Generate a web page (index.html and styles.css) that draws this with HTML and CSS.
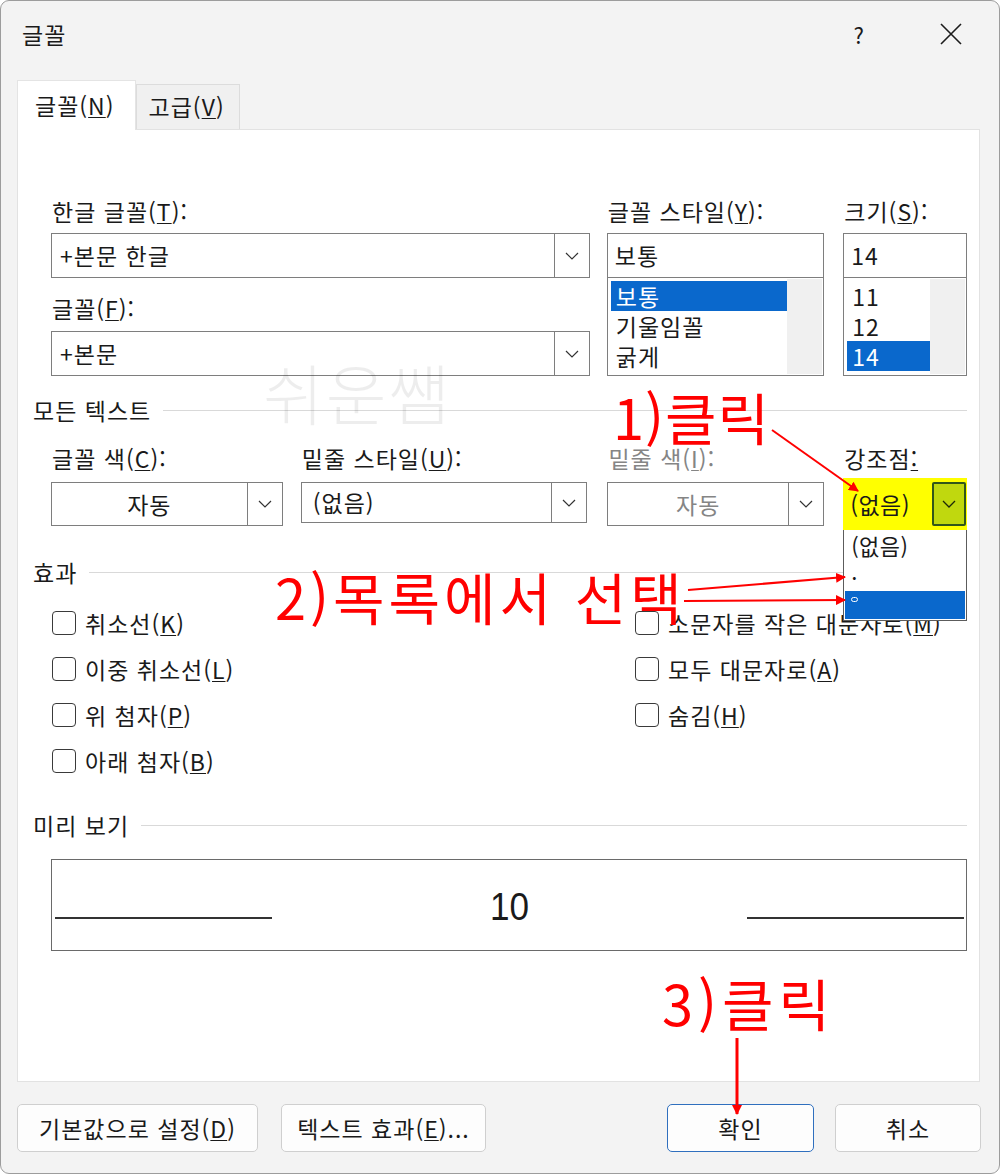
FILE: index.html
```html
<!DOCTYPE html>
<html lang="ko">
<head>
  <meta charset="UTF-8" />
  <title>글꼴</title>
  <link rel="stylesheet" href="styles.css">
</head>
<body>
  <div class="dialog">
    <div class="titlebar">
      <span class="title">글꼴</span>
      <span class="help">?</span>
      <svg class="close" width="24" height="24" viewBox="0 0 24 24"><path d="M2 2 L22 22 M22 2 L2 22" stroke="#1b1b1b" stroke-width="1.6" fill="none"/></svg>
    </div>

    <div class="tabs">
      <div class="tab active">글꼴(<u>N</u>)</div>
      <div class="tab">고급(<u>V</u>)</div>
    </div>

    <div class="panel">
      <div class="font-grid">
        <div class="col col-face">
          <div class="field-label">한글 글꼴(<u>T</u>):</div>
          <div class="combo">
            <span class="combo-text">+본문 한글</span>
            <span class="drop"><svg width="14" height="8" viewBox="0 0 14 8"><path d="M1 1 L7 7 L13 1" stroke="#333" stroke-width="1.2" fill="none"/></svg></span>
          </div>
          <div class="field-label next">글꼴(<u>F</u>):</div>
          <div class="combo">
            <span class="combo-text">+본문</span>
            <span class="drop"><svg width="14" height="8" viewBox="0 0 14 8"><path d="M1 1 L7 7 L13 1" stroke="#333" stroke-width="1.2" fill="none"/></svg></span>
          </div>
        </div>
        <div class="col col-style">
          <div class="field-label">글꼴 스타일(<u>Y</u>):</div>
          <div class="textbox">보통</div>
          <div class="listbox">
            <ul class="items">
              <li class="selected">보통</li>
              <li>기울임꼴</li>
              <li>굵게</li>
            </ul>
            <div class="scroll"></div>
          </div>
        </div>
        <div class="col col-size">
          <div class="field-label">크기(<u>S</u>):</div>
          <div class="textbox">14</div>
          <div class="listbox">
            <ul class="items">
              <li>11</li>
              <li>12</li>
              <li class="selected">14</li>
            </ul>
            <div class="scroll"></div>
          </div>
        </div>
      </div>

      <div class="section"><span>모든 텍스트</span></div>
      <div class="all-text">
        <div class="col w-color">
          <div class="field-label">글꼴 색(<u>C</u>):</div>
          <div class="combo short">
            <span class="combo-text center">자동</span>
            <span class="drop"><svg width="14" height="8" viewBox="0 0 14 8"><path d="M1 1 L7 7 L13 1" stroke="#333" stroke-width="1.2" fill="none"/></svg></span>
          </div>
        </div>
        <div class="col w-under">
          <div class="field-label">밑줄 스타일(<u>U</u>):</div>
          <div class="combo short slim">
            <span class="combo-text">(없음)</span>
            <span class="drop"><svg width="14" height="8" viewBox="0 0 14 8"><path d="M1 1 L7 7 L13 1" stroke="#333" stroke-width="1.2" fill="none"/></svg></span>
          </div>
        </div>
        <div class="col w-ucolor">
          <div class="field-label disabled">밑줄 색(<u>I</u>):</div>
          <div class="combo short">
            <span class="combo-text center disabled">자동</span>
            <span class="drop"><svg width="14" height="8" viewBox="0 0 14 8"><path d="M1 1 L7 7 L13 1" stroke="#333" stroke-width="1.2" fill="none"/></svg></span>
          </div>
        </div>
        <div class="col w-emph">
          <div class="field-label">강조점<u>:</u></div>
          <div class="combo accent">
            <span class="combo-text">(없음)</span>
            <span class="drop"><svg width="14" height="8" viewBox="0 0 14 8"><path d="M1 1 L7 7 L13 1" stroke="#1d2a08" stroke-width="1.3" fill="none"/></svg></span>
            <ul class="droplist">
              <li>(없음)</li>
              <li class="dot">.</li>
              <li class="selected"><span class="mark"></span></li>
            </ul>
          </div>
        </div>
      </div>

      <div class="section"><span>효과</span></div>
      <div class="effects">
        <label class="check"><span class="box"></span>취소선(<u>K</u>)</label>
        <label class="check"><span class="box"></span>이중 취소선(<u>L</u>)</label>
        <label class="check"><span class="box"></span>위 첨자(<u>P</u>)</label>
        <label class="check"><span class="box"></span>아래 첨자(<u>B</u>)</label>
        <label class="check"><span class="box"></span>소문자를 작은 대문자로(<u>M</u>)</label>
        <label class="check"><span class="box"></span>모두 대문자로(<u>A</u>)</label>
        <label class="check"><span class="box"></span>숨김(<u>H</u>)</label>
      </div>

      <div class="section"><span>미리 보기</span></div>
      <div class="preview">
        <span class="rule"></span>
        <span class="sample">10</span>
        <span class="rule"></span>
      </div>
    </div>

    <div class="actions">
      <button class="btn btn-default-set">기본값으로 설정(<u>D</u>)</button>
      <button class="btn btn-effects">텍스트 효과(<u>E</u>)...</button>
      <span class="spacer"></span>
      <button class="btn btn-ok">확인</button>
      <button class="btn btn-cancel">취소</button>
    </div>

    <div class="watermark">쉬운쌤</div>

    <div class="note note-1">1)클릭</div>
    <div class="note note-2">2)목록에서 선택</div>
    <div class="note note-3">3)클릭</div>
    <svg class="arrows" width="1000" height="1174" viewBox="0 0 1000 1174">
      <defs>
        <marker id="head" markerWidth="10" markerHeight="10" refX="9" refY="5" orient="auto" markerUnits="userSpaceOnUse">
          <path d="M0 0 L10 5 L0 10 Z" fill="#f00"/>
        </marker>
      </defs>
      <g stroke="#f00" stroke-width="2" fill="none">
        <line x1="772" y1="430" x2="858" y2="491" marker-end="url(#head)"/>
        <line x1="688" y1="590" x2="845" y2="577" marker-end="url(#head)"/>
        <line x1="684" y1="601" x2="845" y2="600" marker-end="url(#head)"/>
        <line x1="737" y1="1038" x2="737" y2="1114" stroke-width="3" marker-end="url(#head)"/>
      </g>
    </svg>
  </div>
</body>
</html>
```

FILE: styles.css
```css
body {
  margin: 0;
  font-family: "Noto Sans CJK KR", "Noto Sans", sans-serif;
  color: #1a1a1a;
  background: #fff;
}

.dialog {
  position: relative;
  width: 1000px;
  height: 1174px;
  box-sizing: border-box;
  border: 1px solid #9c9c9c;
  border-radius: 9px;
  background: #f3f3f3;
  overflow: hidden;
  font-size: 23px;
  line-height: 30px;
  letter-spacing: 1px;
}

u {
  text-decoration-thickness: 1px;
  text-underline-offset: 2px;
}

/* title bar */
.titlebar {
  height: 79px;
  display: flex;
  align-items: flex-start;
  padding: 17px 36px 0 21px;
  box-sizing: border-box;
}
.title {
  font-size: 23px;
  line-height: 32px;
}
.help {
  margin-left: auto;
  font-size: 22px;
  line-height: 32px;
  margin-right: 74px;
}
.close {
  margin-top: 4px;
}

/* tabs */
.tabs {
  display: flex;
  align-items: flex-end;
  margin-left: 16px;
  height: 49px;
}
.tab {
  height: 45px;
  padding: 0 14px 0 12px;
  box-sizing: border-box;
  border: 1px solid #dcdcdc;
  border-bottom: none;
  background: #f0f0f0;
  line-height: 42px;
}
.tab.active {
  height: 50px;
  margin-bottom: -1px;
  background: #fff;
  padding: 0 20px 0 17px;
  line-height: 48px;
  position: relative;
  z-index: 1;
  border-color: #e4e4e4;
}

/* panel */
.panel {
  margin-left: 16px;
  width: 963px;
  height: 953px;
  box-sizing: border-box;
  background: #fff;
  border: 1px solid #e2e2e2;
  padding: 66px 12px 0 33px;
}

.font-grid {
  display: flex;
}
.col {
  display: flex;
  flex-direction: column;
}
.col-face { width: 540px; }
.col-style { width: 218px; margin-left: 17px; }
.col-size { width: 124px; margin-left: 19px; }

.field-label {
  height: 30px;
  padding-left: 1px;
  margin-bottom: 7px;
  white-space: nowrap;
}
.field-label.next {
  margin-top: 15px;
  margin-bottom: 8px;
}
.field-label.disabled,
.combo-text.disabled {
  color: #858585;
}

.combo {
  position: relative;
  display: flex;
  height: 45px;
  box-sizing: border-box;
  border: 1px solid #7e7e7e;
  background: #fff;
}
.combo.short { height: 44px; }
.combo.slim { height: 41px; }
.combo-text {
  flex: 1;
  padding-left: 8px;
  line-height: 42px;
}
.combo.slim .combo-text { line-height: 38px; padding-left: 11px; }
.combo-text.center {
  text-align: center;
  padding-left: 0;
}
.drop {
  width: 34px;
  border-left: 1px solid #7e7e7e;
  display: flex;
  align-items: center;
  justify-content: center;
}

.textbox {
  height: 45px;
  box-sizing: border-box;
  border: 1px solid #7e7e7e;
  padding-left: 7px;
  line-height: 42px;
  background: #fff;
}
.listbox {
  height: 99px;
  margin-top: -1px;
  box-sizing: border-box;
  border: 1px solid #7e7e7e;
  display: flex;
  padding: 3px 1px 2px 3px;
  background: #fff;
}
.items {
  list-style: none;
  margin: 0;
  padding: 0;
  flex: 1;
}
.items li {
  height: 30px;
  line-height: 30px;
  padding-left: 5px;
}
.items li.selected {
  background: #0a68cc;
  color: #fff;
}
.scroll {
  width: 35px;
  margin: -2px 0 -1px;
  background: #f0f0f0;
}

/* section headers */
.section {
  display: flex;
  align-items: center;
  margin-left: -18px;
  height: 30px;
  margin-top: 19px;
}
.section::after {
  content: "";
  flex: 1;
  height: 1px;
  background: #d9d9d9;
  margin-left: 12px;
}

.all-text {
  display: flex;
  margin-top: 18px;
}
.all-text .field-label { margin-bottom: 9px; }
.w-color { width: 232px; }
.w-under { width: 287px; margin-left: 18px; }
.w-ucolor { width: 217px; margin-left: 20px; }
.w-emph { width: 124px; margin-left: 19px; }

.combo.accent {
  height: 52px;
  margin-top: -4px;
  border: none;
  background: #ffff00;
  padding: 4px 1px 4px 0;
}
.combo.accent .combo-text {
  font-size: 23px;
  line-height: 44px;
  padding-left: 7px;
  letter-spacing: 0.5px;
}
.combo.accent .drop {
  width: 30px;
  border: 2px solid #31561a;
  border-radius: 2px;
  background: #c0d80e;
}

.droplist {
  position: absolute;
  top: 52px;
  left: 0;
  width: 124px;
  height: 91px;
  box-sizing: border-box;
  margin: 0;
  padding: 0 1px;
  list-style: none;
  background: #fff;
  border: 1px solid #5c5c5c;
  border-top: none;
  z-index: 3;
}
.droplist li {
  height: 30px;
  line-height: 30px;
  padding-left: 6px;
  font-size: 22px;
  letter-spacing: 0.5px;
}
.droplist li.dot {
  height: 31px;
  line-height: 20px;
}
.droplist li.selected {
  height: 28px;
  background: #0a68cc;
}
.mark {
  display: inline-block;
  width: 5px;
  height: 3px;
  margin: 6px 0 0 0;
  border: 1.5px solid #fff;
  border-radius: 3px;
  vertical-align: top;
}

.all-text + .section { margin-top: 27px; }

.effects {
  display: grid;
  grid-template-columns: 583px 1fr;
  grid-template-rows: repeat(4, 46px);
  grid-auto-flow: column;
  margin-top: 13px;
}
.check {
  display: flex;
  align-items: center;
  padding-left: 1px;
  white-space: nowrap;
}
.box {
  width: 24px;
  height: 24px;
  box-sizing: border-box;
  border: 1.5px solid #3a3a3a;
  border-radius: 4px;
  margin-right: 9px;
}
.effects + .section { margin-top: 26px; }

.preview {
  margin-top: 19px;
  height: 92px;
  box-sizing: border-box;
  border: 1px solid #6a6a6a;
  display: flex;
  align-items: flex-end;
  padding: 0 2px 31px 3px;
}
.rule {
  width: 217px;
  height: 2px;
  background: #333;
}
.sample {
  flex: 1;
  text-align: center;
  font-family: "Liberation Sans", Arial, sans-serif;
  font-size: 39px;
  line-height: 39px;
  letter-spacing: 0;
  margin-bottom: -7px;
  transform: scaleX(0.9);
}

/* bottom buttons */
.actions {
  display: flex;
  margin: 22px 18px 0 16px;
}
.btn {
  height: 48px;
  box-sizing: border-box;
  border: 1px solid #cfcfcf;
  border-radius: 5px;
  background: #fdfdfd;
  font-family: inherit;
  font-size: 23px;
  letter-spacing: 1px;
  color: #1a1a1a;
  padding: 0;
}
.btn-default-set { width: 241px; }
.btn-effects { width: 205px; margin-left: 23px; }
.spacer { flex: 1; }
.btn-ok {
  width: 147px;
  border-color: #2f6fbe;
}
.btn-cancel { width: 146px; margin-left: 21px; }

/* watermark + annotations */
.watermark {
  position: absolute;
  left: 262px;
  top: 350px;
  font-size: 66px;
  line-height: 80px;
  font-weight: 300;
  letter-spacing: 2px;
  color: rgba(0, 0, 0, 0.07);
  pointer-events: none;
}
.note {
  position: absolute;
  color: #ff0000;
  font-size: 56px;
  line-height: 46px;
  font-weight: 400;
  white-space: nowrap;
  z-index: 5;
}
.note-1 { left: 612px; top: 392px; letter-spacing: 1px; }
.note-2 { left: 274px; top: 572px; letter-spacing: 4px; }
.note-3 { left: 661px; top: 978px; letter-spacing: 5px; }
.arrows {
  position: absolute;
  left: -1px;
  top: -1px;
  z-index: 6;
  pointer-events: none;
}
```
